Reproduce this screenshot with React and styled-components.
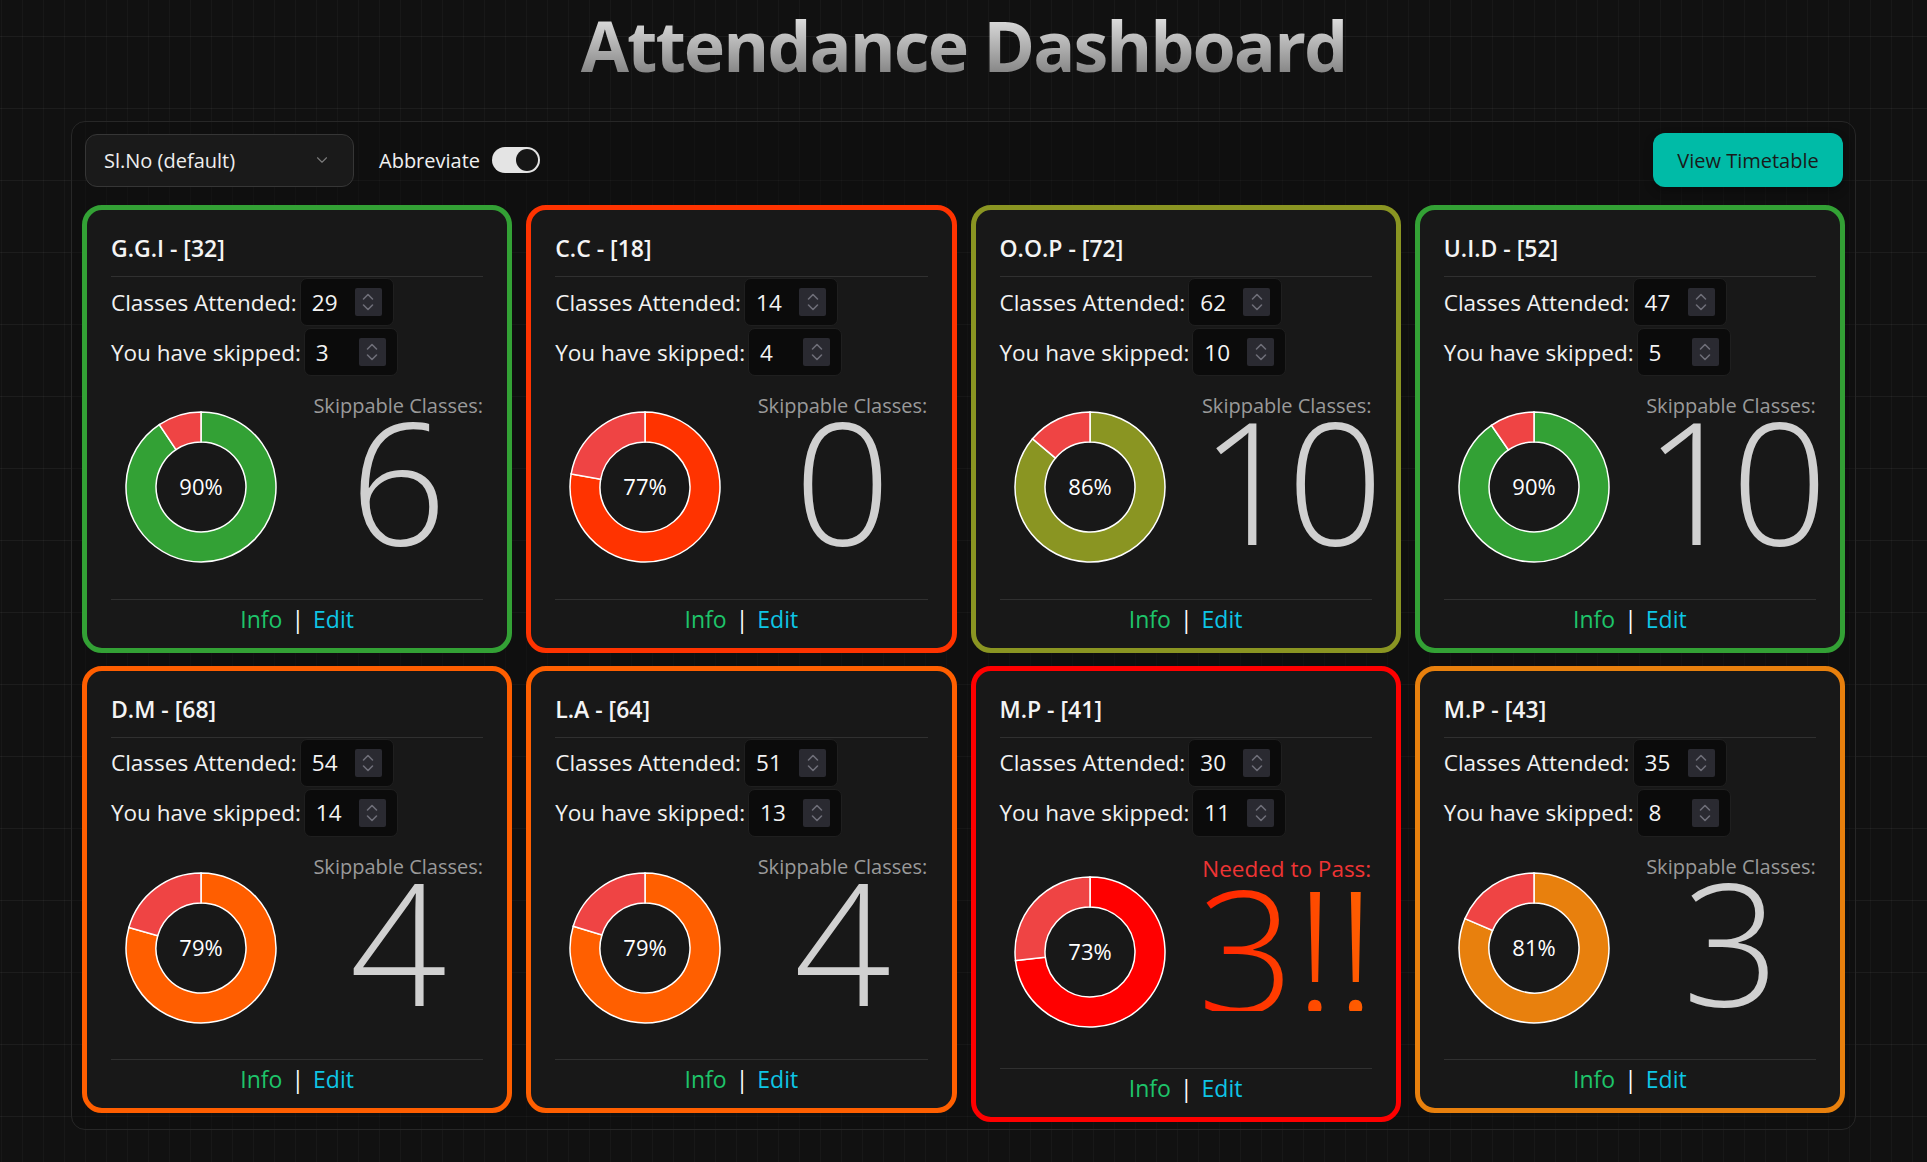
import styled, { createGlobalStyle } from 'styled-components'
import { ChevronDown } from 'lucide-react'

const subjects = [
  { code: 'G.G.I', id: 32, attended: 29, skipped: 3, value: 6, color: '#33a135' },
  { code: 'C.C', id: 18, attended: 14, skipped: 4, value: 0, color: '#ff3300' },
  { code: 'O.O.P', id: 72, attended: 62, skipped: 10, value: 10, color: '#8a9522' },
  { code: 'U.I.D', id: 52, attended: 47, skipped: 5, value: 10, color: '#33a135' },
  { code: 'D.M', id: 68, attended: 54, skipped: 14, value: 4, color: '#ff5e00' },
  { code: 'L.A', id: 64, attended: 51, skipped: 13, value: 4, color: '#ff5f00' },
  { code: 'M.P', id: 41, attended: 30, skipped: 11, value: 3, color: '#ff0000', needed: true },
  { code: 'M.P', id: 43, attended: 35, skipped: 8, value: 3, color: '#e8800d' },
]

function point(r, deg) {
  const rad = (deg - 90) * Math.PI / 180
  return [90 + r * Math.cos(rad), 90 + r * Math.sin(rad)]
}

function arc(a0, a1) {
  const outer = 75, inner = 45
  const large = a1 - a0 > 180 ? 1 : 0
  const [x0, y0] = point(outer, a0)
  const [x1, y1] = point(outer, a1)
  const [x2, y2] = point(inner, a1)
  const [x3, y3] = point(inner, a0)
  return `M${x0} ${y0} A${outer} ${outer} 0 ${large} 1 ${x1} ${y1} L${x2} ${y2} A${inner} ${inner} 0 ${large} 0 ${x3} ${y3} Z`
}

function Donut({ attended, skipped, color }) {
  const total = attended + skipped
  const split = (attended / total) * 360
  const pct = Math.floor((attended / total) * 100)
  return (
    <svg width="180" height="180" viewBox="0 0 180 180">
      <path d={arc(0, split)} fill={color} stroke="#fff" strokeWidth="1.5" />
      <path d={arc(split, 360)} fill="#ef4444" stroke="#fff" strokeWidth="1.5" />
      <text x="90" y="98" textAnchor="middle" fill="#fff" fontSize="22" fontFamily="'Open Sans', sans-serif">{pct}%</text>
    </svg>
  )
}

function Spin() {
  return (
    <Spinner>
      <svg width="14" height="22" viewBox="0 0 14 22" fill="none" stroke="#6e6e78" strokeWidth="1.6" strokeLinecap="round" strokeLinejoin="round">
        <polyline points="2.5,8 7,3.5 11.5,8" />
        <polyline points="2.5,14 7,18.5 11.5,14" />
      </svg>
    </Spinner>
  )
}

function SubjectCard({ s }) {
  const big = s.needed ? `${s.value}!!` : String(s.value)
  return (
    <Card $color={s.color}>
      <CardTitle>{s.code} - [{s.id}]</CardTitle>
      <Row>
        <Label>Classes Attended:</Label>
        <NumberBox><span>{s.attended}</span><Spin /></NumberBox>
      </Row>
      <Row>
        <Label>You have skipped:</Label>
        <NumberBox><span>{s.skipped}</span><Spin /></NumberBox>
      </Row>
      <ChartArea>
        <Donut attended={s.attended} skipped={s.skipped} color={s.color} />
        <Side>
          <SideLabel $needed={s.needed}>{s.needed ? 'Needed to Pass:' : 'Skippable Classes:'}</SideLabel>
          <BigNumber $needed={s.needed} $tight={!s.needed && big.length > 1}>{big}</BigNumber>
        </Side>
      </ChartArea>
      <Footer>
        <InfoLink>Info</InfoLink>
        <Sep>|</Sep>
        <EditLink>Edit</EditLink>
      </Footer>
    </Card>
  )
}

export default function App() {
  return (
    <>
      <GlobalStyle />
      <Page>
        <Title>Attendance Dashboard</Title>
        <Panel>
          <Toolbar>
            <ToolGroup>
              <Select>
                <span>Sl.No (default)</span>
                <ChevronDown size={18} color="#7a7a7a" strokeWidth={1.5} />
              </Select>
              <SwitchLabel>
                Abbreviate
                <Switch />
              </SwitchLabel>
            </ToolGroup>
            <TimetableButton>View Timetable</TimetableButton>
          </Toolbar>
          <CardGrid>
            {subjects.map((s) => <SubjectCard key={s.code + s.id} s={s} />)}
          </CardGrid>
        </Panel>
      </Page>
    </>
  )
}

const GlobalStyle = createGlobalStyle`
  body {
    margin: 0;
    min-height: 100vh;
    background-color: #111111;
    background-image:
      linear-gradient(rgba(255, 255, 255, 0.05) 1px, transparent 1px),
      linear-gradient(90deg, rgba(255, 255, 255, 0.032) 1px, transparent 1px);
    background-size: 72px 72px, 21px 21px;
    background-position: 0 36px, 1px 0;
    font-family: 'Open Sans', 'Noto Sans', sans-serif;
    color: #eeeeee;
  }
`

const Page = styled.div`
  padding: 3px 71px 31px;
`

const Title = styled.h1`
  margin: 0;
  text-align: center;
  font-size: 70px;
  font-weight: 700;
  line-height: 84px;
  letter-spacing: -2px;
  background: linear-gradient(180deg, #dadada 20%, #848484 85%);
  -webkit-background-clip: text;
  background-clip: text;
  color: transparent;
`

const Panel = styled.section`
  margin-top: 34px;
  border: 1px solid #272727;
  border-radius: 14px;
  background: rgba(12, 12, 12, 0.35);
  padding: 11px 10px 7px;
`

const Toolbar = styled.div`
  display: flex;
  justify-content: space-between;
  align-items: center;
  padding: 0 2px 0 3px;
  margin-bottom: 18px;
`

const ToolGroup = styled.div`
  display: flex;
  align-items: center;
`

const Select = styled.div`
  box-sizing: border-box;
  width: 269px;
  height: 53px;
  display: flex;
  align-items: center;
  justify-content: space-between;
  padding: 0 22px 0 18px;
  background: #1a1a1a;
  border: 1px solid #363636;
  border-radius: 12px;
  font-size: 20px;
  color: #eeeeee;
`

const SwitchLabel = styled.label`
  display: flex;
  align-items: center;
  gap: 12px;
  margin-left: 25px;
  font-size: 20px;
  color: #f0f0f0;
`

const Switch = styled.span`
  position: relative;
  width: 48px;
  height: 26px;
  border-radius: 13px;
  background: #e4e4e4;

  &::after {
    content: '';
    position: absolute;
    top: 2px;
    right: 2px;
    width: 22px;
    height: 22px;
    border-radius: 50%;
    background: #161616;
  }
`

const TimetableButton = styled.button`
  all: unset;
  width: 190px;
  height: 54px;
  display: flex;
  align-items: center;
  justify-content: center;
  background: #00bba7;
  border-radius: 12px;
  font-family: 'Open Sans', sans-serif;
  font-size: 20px;
  color: #1a1a1a;
  box-shadow: 0 4px 10px rgba(0, 0, 0, 0.3);
`

const CardGrid = styled.div`
  display: grid;
  grid-template-columns: repeat(4, 1fr);
  gap: 13px 14px;
  align-items: start;
`

const Card = styled.div`
  border: 5px solid ${(p) => p.$color};
  border-radius: 20px;
  background: #181818;
  padding: 23px 24px 14px;
`

const CardTitle = styled.div`
  font-size: 23px;
  font-weight: 600;
  line-height: 31px;
  color: #f4f4f4;
  padding-bottom: 12px;
  border-bottom: 1px solid #303030;
  margin-bottom: 1px;
`

const Row = styled.div`
  display: flex;
  align-items: center;
  height: 48px;
  font-size: 22.5px;

  & + & {
    margin-top: 2px;
  }
`

const Label = styled.span`
  white-space: nowrap;
  margin-right: 3px;
  color: #f2f2f2;
`

const NumberBox = styled.div`
  box-sizing: border-box;
  width: 94px;
  height: 48px;
  display: flex;
  align-items: center;
  justify-content: space-between;
  padding: 0 11px 0 11px;
  background: #0b0b0b;
  border: 1px solid #1f1f1f;
  border-radius: 7px;
  color: #f4f4f4;
`

const Spinner = styled.span`
  width: 27px;
  height: 28px;
  display: flex;
  align-items: center;
  justify-content: center;
  background: #2a2a31;
  border-radius: 2px;
`

const ChartArea = styled.div`
  display: flex;
  align-items: center;
  justify-content: space-between;
  padding-top: 16px;
  margin-bottom: 16px;
`

const Side = styled.div`
  width: 170px;
  flex-shrink: 0;
  display: flex;
  flex-direction: column;
  align-items: center;
`

const SideLabel = styled.div`
  font-size: ${(p) => (p.$needed ? '22.5px' : '20px')};
  line-height: ${(p) => (p.$needed ? '31px' : '28px')};
  color: ${(p) => (p.$needed ? '#ee3434' : '#9a9a9a')};
  white-space: nowrap;
`

const BigNumber = styled.div`
  font-size: 170px;
  font-weight: 350;
  line-height: 0.75;
  white-space: nowrap;
  color: #d0d0d0;
  letter-spacing: ${(p) => (p.$tight ? '-10px' : '0')};
  margin: ${(p) => (p.$needed ? '0 0 41px' : '-4px 0 39px')};
  ${(p) => p.$needed && `
    background: linear-gradient(90deg, #ff1e00 0%, #ff6200 100%);
    -webkit-background-clip: text;
    background-clip: text;
    color: transparent;
  `}
`

const Footer = styled.div`
  border-top: 1px solid #303030;
  padding-top: 4px;
  text-align: center;
  font-size: 23px;
  line-height: 30px;
`

const InfoLink = styled.span`
  color: #1ec46a;
`

const Sep = styled.span`
  color: #ffffff;
  margin: 0 9px;
`

const EditLink = styled.span`
  color: #0ec5e5;
`
